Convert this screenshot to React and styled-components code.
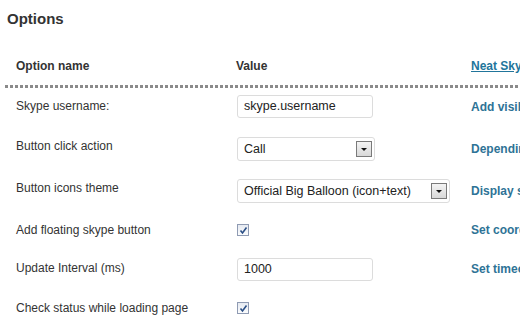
import React from 'react';
import styled, { createGlobalStyle } from 'styled-components';

const Global = createGlobalStyle`
  body {
    margin: 0;
    background: #fff;
    font-family: "Liberation Sans", Arial, sans-serif;
    color: #333;
  }
`;

const Page = styled.div`
  width: 520px;
  height: 320px;
  overflow: hidden;
  padding: 10px 0 0 7px;
  box-sizing: border-box;
`;

const Title = styled.h2`
  margin: 0;
  font-size: 15px;
  font-weight: bold;
  color: #333;
  line-height: 17px;
`;

const Table = styled.div`
  margin-top: 32px;
  display: grid;
  grid-template-columns: 229px 235px 120px;
  width: 600px;
`;

const Head = styled.div`
  font-size: 12px;
  font-weight: bold;
  padding-left: ${p => (p.$first ? '9px' : '0')};
  height: 26px;
  line-height: 14px;
  white-space: nowrap;
  color: ${p => (p.$link ? '#21759b' : '#333')};
  text-decoration: ${p => (p.$link ? 'underline' : 'none')};
`;

const Dots = styled.div`
  grid-column: 1 / -1;
  height: 3px;
  margin-left: -2px;
  background: repeating-linear-gradient(to right, #8a8a8a 0 3px, transparent 3px 5px);
`;

const Row = styled.div`
  display: contents;
`;

const Cell = styled.div`
  height: ${p => p.$h}px;
  display: flex;
  align-items: center;
  white-space: nowrap;
  overflow: hidden;
  padding-top: ${p => p.$off || 0}px;
  padding-left: ${p => p.$pl || 0}px;
  box-sizing: border-box;
`;

const Label = styled(Cell)`
  font-size: 12px;
  color: #333;
  padding-left: 9px;
`;

const Desc = styled(Cell)`
  font-size: 12px;
  font-weight: bold;
  color: #2e7396;
`;

const Input = styled.div`
  width: 128px;
  height: 21px;
  border: 1px solid #dcdcdc;
  border-radius: 3px;
  padding-left: 6px;
  font-size: 12.5px;
  line-height: 21px;
  color: #222;
  box-sizing: content-box;
`;

const Select = styled.div`
  width: ${p => p.$w}px;
  height: 24px;
  border: 1px solid #dcdcdc;
  border-radius: 3px;
  display: flex;
  align-items: center;
  justify-content: space-between;
  padding: 0 2px 0 6px;
  font-size: 12.5px;
  color: #222;
  box-sizing: border-box;
`;

const Arrow = styled.span`
  width: 16px;
  height: 16px;
  border: 1px solid #7a7a7a;
  background: linear-gradient(#f4f4f4, #d8d8d8);
  box-sizing: border-box;
  display: flex;
  align-items: center;
  justify-content: center;
  &::after {
    content: '';
    border-left: 3px solid transparent;
    border-right: 3px solid transparent;
    border-top: 3px solid #111;
    margin-top: 1px;
  }
`;

const Check = styled.span`
  width: 12px;
  height: 12px;
  border: 1px solid #8f9bb3;
  background: linear-gradient(#e6eaf1, #fbfcfd);
  box-sizing: border-box;
  display: flex;
  align-items: center;
  justify-content: center;
`;

const CheckBox = () => (
  <Check>
    <svg width="9" height="9" viewBox="0 0 9 9">
      <path d="M1.5 4.5 L3.5 7 L7.5 1.5" fill="none" stroke="#2b4f86" strokeWidth="1.6" />
    </svg>
  </Check>
);

const rows = [
  { label: 'Skype username:', h: 36, off: 1, ctl: <Input>skype.username</Input>, desc: 'Add visible skype name' },
  { label: 'Button click action', h: 44, off: 6, ctl: <Select $w={138}>Call<Arrow /></Select>, desc: 'Depending on action' },
  { label: 'Button icons theme', h: 40, off: 6, ctl: <Select $w={213}>Official Big Balloon (icon+text)<Arrow /></Select>, desc: 'Display style' },
  { label: 'Add floating skype button', h: 44, off: 0, ctl: <CheckBox />, desc: 'Set coordinates' },
  { label: 'Update Interval (ms)', h: 32, off: 2, ctl: <Input>1000</Input>, desc: 'Set timeout' },
  { label: 'Check status while loading page', h: 48, off: 0, ctl: <CheckBox />, desc: '' },
];

export default function App() {
  return (
    <Page>
      <Global />
      <Title>Options</Title>
      <Table>
        <Head $first>Option name</Head>
        <Head>Value</Head>
        <Head $link>Neat Skype Status</Head>
        <Dots />
        {rows.map(r => (
          <Row key={r.label}>
            <Label $h={r.h}>{r.label}</Label>
            <Cell $h={r.h} $off={r.off} $pl={1}>{r.ctl}</Cell>
            <Desc $h={r.h} $off={r.off}>{r.desc}</Desc>
          </Row>
        ))}
      </Table>
    </Page>
  );
}
